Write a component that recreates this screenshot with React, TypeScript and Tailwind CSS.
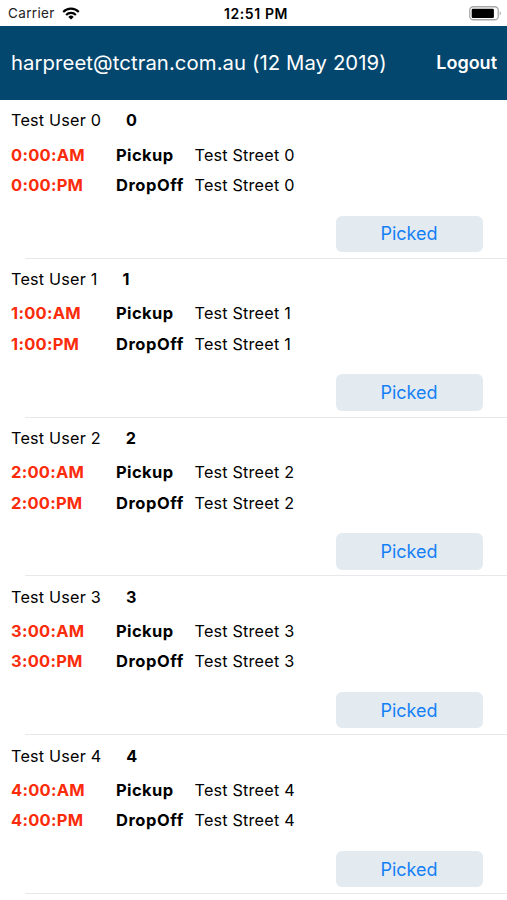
type Trip = {
  id: number;
  name: string;
  street: string;
};

const trips: Trip[] = [0, 1, 2, 3, 4].map((n) => ({
  id: n,
  name: `Test User ${n}`,
  street: `Test Street ${n}`,
}));

function WifiIcon() {
  return (
    <svg width="18" height="13" viewBox="0 0 18 13" fill="none" stroke="#000" strokeWidth="2.1">
      <path d="M1.2 4.9a11 11 0 0 1 15.6 0" />
      <path d="M4.1 7.9a6.9 6.9 0 0 1 9.8 0" />
      <path d="M9 12.6 6.3 9.9a3.8 3.8 0 0 1 5.4 0Z" fill="#000" stroke="none" />
    </svg>
  );
}

function BatteryIcon() {
  return (
    <svg width="33" height="15" viewBox="0 0 33 15">
      <rect x="0.75" y="0.75" width="28.5" height="13" rx="3.6" fill="#fff" stroke="#a8a8a8" strokeWidth="1.3" />
      <rect x="2.7" y="2.7" width="22.2" height="9.2" rx="1.2" fill="#000" />
      <path d="M30.7 5.2c1.6.6 1.6 3.6 0 4.2Z" fill="#a8a8a8" />
    </svg>
  );
}

function StatusBar() {
  return (
    <div className="grid h-[25.5px] grid-cols-[1fr_auto_1fr] items-center pt-[2px] pr-[5px] pl-[8px] text-[13.5px] leading-none">
      <div className="flex items-center gap-[7px]">
        <span className="tracking-[0.35px] text-[#222]">Carrier</span>
        <WifiIcon />
      </div>
      <span className="pl-[2px] text-[14px] font-semibold tracking-[0.6px]">12:51 PM</span>
      <div className="flex justify-end">
        <BatteryIcon />
      </div>
    </div>
  );
}

function TripRow({ trip }: { trip: Trip }) {
  return (
    <li className="flex h-[158.8px] flex-col">
      <div className="flex flex-1 flex-col pt-[8.5px] pr-[24.5px] pl-[11px]">
        <div className="flex h-6 items-center gap-[25px]">
          <span>{trip.name}</span>
          <span className="font-bold">{trip.id}</span>
        </div>
        <div className="mt-[7px] grid grid-cols-[105px_78.5px_auto] auto-rows-[30.5px] items-baseline leading-[30.5px]">
          <span className="text-[16.5px] font-bold tracking-[0.25px] text-[#fb2c0b]">{trip.id}:00:AM</span>
          <span className="text-[16.5px] font-bold tracking-[0.4px]">Pickup</span>
          <span>{trip.street}</span>
          <span className="text-[16.5px] font-bold tracking-[0.25px] text-[#fb2c0b]">{trip.id}:00:PM</span>
          <span className="text-[16.5px] font-bold tracking-[0.55px]">DropOff</span>
          <span>{trip.street}</span>
        </div>
        <button
          type="button"
          className="mt-[15px] h-[36.5px] w-[147px] self-end rounded-[6px] bg-[#e3ebf1] text-[18px] tracking-normal text-[#1580f5]"
        >
          Picked
        </button>
      </div>
      <div className="ml-[25px] h-px bg-[#e8e8ea]" />
    </li>
  );
}

export default function App() {
  return (
    <div className="h-[900px] overflow-hidden bg-white font-['Inter',sans-serif] text-[16.2px] tracking-[0.2px] text-black">
      <StatusBar />
      <header className="flex h-[74px] items-center justify-between bg-[#03476f] pr-[10px] pl-[11px] text-white">
        <h1 className="pt-px text-[20.3px] tracking-[0.09px]">harpreet@tctran.com.au (12 May 2019)</h1>
        <button type="button" className="text-[18px] font-semibold tracking-normal">
          Logout
        </button>
      </header>
      <ul className="pt-[0.6px]">
        {trips.map((trip) => (
          <TripRow key={trip.id} trip={trip} />
        ))}
      </ul>
    </div>
  );
}
